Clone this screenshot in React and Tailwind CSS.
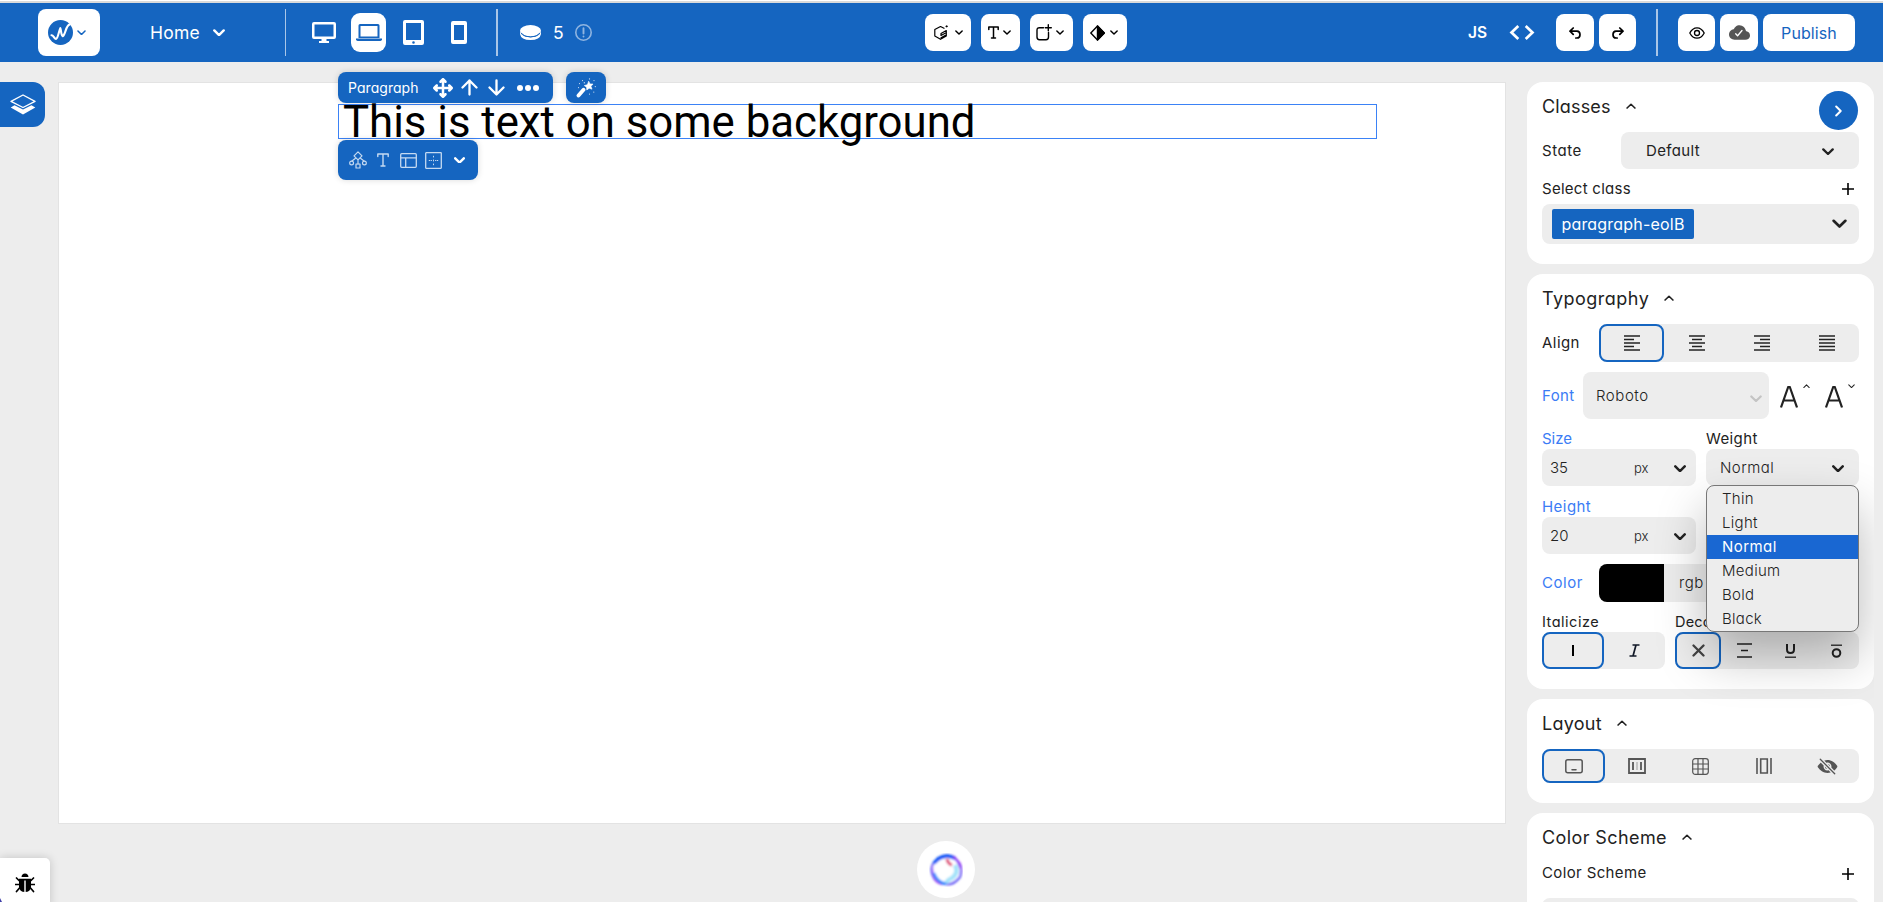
import React from "react";
import { FaArrowsUpDownLeftRight } from "react-icons/fa6";
import { IoCloudDone, IoEyeOff } from "react-icons/io5";

function Svg({ w, h, vb, className = "", sw = 1.5, children }) {
  return (
    <svg width={w} height={h} viewBox={vb || `0 0 ${w} ${h}`} className={`block shrink-0 ${className}`} fill="none" stroke="currentColor" strokeWidth={sw} strokeLinecap="round" strokeLinejoin="round">
      {children}
    </svg>
  );
}

function Chevron({ w = 12, up = false, sw = 2.2, className = "" }) {
  const h = w * 0.62;
  return (
    <Svg w={w} h={h} vb="0 0 12 7.4" sw={sw} className={className}>
      <path d={up ? "M1.3 6 L6 1.5 L10.7 6" : "M1.3 1.4 L6 6 L10.7 1.4"} />
    </Svg>
  );
}

function ToolButton({ className, children }) {
  return <button className={`flex h-[37px] items-center rounded-[8px] bg-white text-black ${className}`}>{children}</button>;
}

function Header() {
  return (
    <header className="flex h-[59px] shrink-0 items-center bg-[#1565c0] text-white">
      <button className="ml-[38px] flex h-[47px] w-[62px] items-center rounded-[8px] bg-white pl-[10px] text-[#1565c0]">
        <svg width="25" height="25" viewBox="0 0 25 25" className="block">
          <circle cx="12.5" cy="12.5" r="12.5" fill="#1565c0" />
          <path d="M3.5 15.2 C5.5 15 5.8 18.5 8 19 C10 18.6 11 10.5 12.3 8.2 C13.2 10 13 15.5 14.8 16.2 C17.5 14.5 18 5 21.5 4.6" stroke="#fff" strokeWidth="2.1" fill="none" strokeLinecap="round" strokeLinejoin="round" />
        </svg>
        <Chevron w={9} sw={2} className="ml-1" />
      </button>
      <div className="ml-[50px] w-[63px] text-[17.5px] font-normal leading-none tracking-[0.25px]">Home</div>
      <Chevron w={12} sw={2.4} />
      <div className="ml-[60px] h-[47px] w-px bg-[#a9c6e8]" />
      <div className="ml-[26px] flex items-center">
        <svg width="24" height="21" viewBox="0 0 24 21" className="block"><path fillRule="evenodd" fill="#fff" d="M2 0H22Q24 0 24 2V15Q24 17 22 17H14.5V19H17V21H7V19H9.5V17H2Q0 17 0 15V2Q0 0 2 0ZM2.500 2.500V14.500H21.500V2.500Z" /></svg>
        <div className="ml-[15px] flex h-[39px] w-[35px] items-center justify-center rounded-[9px] bg-white">
          <svg width="26" height="17" viewBox="0 0 26 17" className="block"><path fill="#1565c0" fillRule="evenodd" d="M4 0H22Q23.500 0 23.500 1.500V14H2.500V1.500Q2.500 0 4 0ZM4.500 2V12.500H21.500V2Z" /><path fill="#1565c0" d="M0 14.500H26V15.500Q25.500 17 24 17H2Q.5 17 0 15.500Z" /></svg>
        </div>
        <svg width="21" height="25" viewBox="0 0 21 25" className="ml-[17px] block"><path fillRule="evenodd" fill="#fff" d="M2 0H19Q21 0 21 2V23Q21 25 19 25H2Q0 25 0 23V2Q0 0 2 0ZM3 3V20H18V3ZM10.500 21.200A1.300 1.300 0 1 0 10.500 23.800A1.300 1.300 0 1 0 10.500 21.200Z" /></svg>
        <svg width="16" height="23" viewBox="0 0 16 23" className="ml-[27px] block"><path fillRule="evenodd" fill="#fff" d="M2 0H14Q16 0 16 2V21Q16 23 14 23H2Q0 23 0 21V2Q0 0 2 0ZM3 4V19H13V4Z" /></svg>
      </div>
      <div className="ml-[29px] h-[47px] w-[2px] bg-[#a9c6e8]" />
      <svg width="21" height="15" viewBox="0 0 21 15" className="ml-[22px] block"><ellipse cx="10.500" cy="5.700" rx="10.500" ry="5.700" fill="#fff" /><path d="M0 6V9Q1 15 10.500 15Q20 15 21 9V6Q20 12 10.500 12.300Q1 12 0 6Z" fill="#fff" /><path d="M1 8Q4 12 10.500 12Q17 12 20 8" stroke="#1565c0" strokeWidth="1" fill="none" /></svg>
      <div className="ml-3 w-[22px] text-[17.500px] font-normal leading-none">5</div>
      <Svg w={17} h={17} sw={1.6} className="text-[#8fb4e0]"><circle cx="8.500" cy="8.500" r="7.700" /><path d="M8.500 4.300V9.600M8.500 12.400V12.500" strokeWidth="1.900" /></Svg>

      <div className="ml-[333px] flex items-center gap-[10px]">
        <ToolButton className="w-[46px] gap-[6px] pl-[9px]">
          <Svg w={15} h={15} sw={1.200}><path d="M10 3.300L6.500 1.500L.8 4.500V11L6.500 14.300L12.300 11V5.500L7 8.500V10.500L12 7.800M7 12.800L12 10M12 1.300H13.300M12.700 .8V1.800" /></Svg>
          <Chevron w={8} />
        </ToolButton>
        <ToolButton className="w-[39px] gap-[4px] pl-[7px]">
          <Svg w={11} h={13} sw={1.500}><path d="M.8 3.500V1H10.200V3.500M5.500 1V12M3.500 12H7.500" /></Svg>
          <Chevron w={8} />
        </ToolButton>
        <ToolButton className="w-[43px] gap-[4px] pl-[6px]">
          <Svg w={16} h={17} sw={1.400}><path d="M7.500 3.700H3.500Q1 3.700 1 6.200V13Q1 15.700 3.500 15.700H10Q12.500 15.700 12.500 13V8.500M12.300 .8V6.800M9.300 3.800H15.300" /></Svg>
          <Chevron w={8} />
        </ToolButton>
        <ToolButton className="w-[44px] gap-[5px] pl-[7px]">
          <Svg w={15} h={16} sw={1.400}><path d="M7.500 1L14.300 8L7.500 15L.8 8Z" /><path d="M7.500 1L14.300 8L7.500 15Z" fill="currentColor" /></Svg>
          <Chevron w={8} />
        </ToolButton>
      </div>

      <div className="ml-[341px] w-[41px] text-[15.500px] font-semibold leading-none">JS</div>
      <Svg w={26} h={15} sw={2.700}><path d="M9.300 1L2.500 7.500L9.300 14M16.700 1L23.500 7.500L16.700 14" strokeLinejoin="miter" strokeLinecap="butt" /></Svg>
      <ToolButton className="ml-[21px] w-[38px] justify-center"><Svg w={12} h={12} sw={1.700}><path d="M4.200 1L1 4.200L4.200 7.400M1 4.200H8Q11 4.400 11 7.700Q11 11 8 11H6.800" /></Svg></ToolButton>
      <ToolButton className="ml-[5px] w-[37px] justify-center"><Svg w={12} h={12} sw={1.700}><path d="M7.800 1L11 4.200L7.800 7.400M11 4.200H4Q1 4.400 1 7.700Q1 11 4 11H5.200" /></Svg></ToolButton>
      <div className="ml-5 h-[47px] w-[2px] bg-[#a9c6e8]" />
      <ToolButton className="ml-5 w-[37px] justify-center"><Svg w={16} h={12} sw={1.300}><path d="M.8 6Q3.500 .8 8 .8T15.200 6Q12.500 11.200 8 11.200T.8 6Z" /><circle cx="8" cy="6" r="2.500" /></Svg></ToolButton>
      <ToolButton className="ml-[5px] w-[38px] justify-center"><IoCloudDone size={21} color="#555" /></ToolButton>
      <button className="ml-[5px] h-[37px] w-[92px] rounded-[8px] bg-white text-[16px] font-normal tracking-[0.1px] text-[#1565c0]">Publish</button>
    </header>
  );
}

function CanvasArea() {
  return (
    <main className="flex w-[1527px] shrink-0 items-start">
      <div className="mt-5 flex h-[45px] w-[45px] shrink-0 items-center justify-center rounded-r-[12px] bg-[#1565c0] text-white">
        <Svg w={26} h={21} sw={1.400}><path d="M13 1L25 7.300L13 13.500L1 7.300Z" /><path d="M4.500 11.300L13 15.600L21.500 11.300L25.300 13.500L13 20.500L.7 13.500Z" fill="currentColor" stroke="none" /></Svg>
      </div>
      <div className="ml-[13px] mt-5 h-[742px] w-[1448px] border border-[#e3e3e3] bg-white pl-[279px] pt-[21px]">
        <div className="relative h-[35px] w-[1039px] border border-[#3b82f6]">
          <p className="whitespace-nowrap pl-[4px] font-['Roboto',sans-serif] text-[43.750px] leading-[35px] text-black">This is text on some background</p>
          <div className="absolute -top-[33px] left-[-1px] flex items-center gap-[13px]">
            <div className="flex h-[31px] w-[215px] items-center rounded-[8px] bg-[#1565c0] pl-[10px] text-white shadow-[0_0_6px_rgba(0,0,0,0.15)]">
              <span className="w-[85px] text-[14px] font-normal tracking-[0.05px]">Paragraph</span>
              <FaArrowsUpDownLeftRight size={20} />
              <Svg w={17} h={17} sw={2.300} className="ml-2"><path d="M8.500 15.500V1.500M1.500 8.500L8.500 1.500L15.500 8.500" /></Svg>
              <Svg w={17} h={17} sw={2.300} className="ml-[10px]"><path d="M8.500 1.500V15.500M1.500 8.500L8.500 15.500L15.500 8.500" /></Svg>
              <Svg w={22} h={6} className="ml-[12px]"><g fill="currentColor" stroke="none"><circle cx="3" cy="3" r="3" /><circle cx="11" cy="3" r="3" /><circle cx="19" cy="3" r="3" /></g></Svg>
            </div>
            <div className="flex h-[31px] w-[40px] items-center justify-center rounded-[8px] bg-[#1565c0] text-white shadow-[0_0_6px_rgba(0,0,0,0.15)]">
              <Svg w={20} h={20} sw={.6}><path d="M2.500 17.500L7.500 11.800" strokeWidth="3.800" /><path d="M12.800 3.500L14 6L17 6L15 8.300L16 11.200L13.200 10.200L10.800 12L10.600 9.200L8.300 7.600L11.200 6.700Z" fill="currentColor" /><path d="M6.500 2.500V2.600M3.500 5.500V5.600M13.500 .8V.9M18 2.500V2.600M19.300 8.500V8.600M17.800 14V14.100M2.500 9.500V9.600M13.500 16V16.100M8.300 4.700V4.800" strokeWidth="1.200" opacity=".8" /></Svg>
            </div>
          </div>
          <div className="absolute left-[-1px] top-[35px] flex h-[40px] w-[140px] items-center rounded-[8px] bg-[#1565c0] pl-[11px] text-[#c5daf1] shadow-[0_0_6px_rgba(0,0,0,0.15)]">
            <Svg w={18} h={18} sw={1.200}><path d="M9 .8L13 4.800L9 8.800L5 4.800ZM9 8.800V13M6.200 7.500L3 10M11.800 7.500L15 10" /><circle cx="2.600" cy="12" r="1.900" /><circle cx="15.400" cy="12" r="1.900" /><rect x="7" y="13" width="4" height="4" /></Svg>
            <Svg w={12} h={14} sw={1.400} className="ml-[10px]"><path d="M.8 3.500V1H11.200V3.500M6 1V13M4 13H8" /></Svg>
            <Svg w={17} h={15} sw={1.300} className="ml-[11px]"><rect x=".7" y=".7" width="15.600" height="13.600" rx="1" /><path d="M1 4.800H16M5.700 5V14" /></Svg>
            <Svg w={17} h={17} sw={1.300} className="ml-[8px]"><rect x=".7" y=".7" width="15.600" height="15.600" rx=".5" /><path d="M8.500 4.200V5M8.500 8V9M8.500 12V12.800M4.200 8.500H5M12 8.500H12.800M6.500 8.500H6.600M10.500 8.500H10.600" strokeWidth="1" /></Svg>
            <Chevron w={11} sw={2.700} className="ml-[12px] text-white" />
          </div>
        </div>
      </div>
    </main>
  );
}

function CardTitle({ className = "tracking-[0.15px]", children }) {
  return (
    <div className={`flex h-[27px] items-center gap-[15px] text-[18px] leading-none text-[#222] ${className}`}>
      <span>{children}</span>
      <Chevron w={10} up sw={2} />
    </div>
  );
}

function Card({ className = "", children }) {
  return <section className={`relative w-[347px] shrink-0 rounded-[16px] bg-white px-[15px] ${className}`}>{children}</section>;
}

const selected = "rounded-[8px] border-2 border-[#1565c0]";

function Plus() {
  return <Svg w={12} h={12} sw={1.600} className="text-black"><path d="M6 0V12M0 6H12" strokeLinecap="butt" /></Svg>;
}

function Lines({ rows }) {
  return <Svg w={16} h={16} sw={1.500}>{rows.map(([a, b], i) => <path key={i} d={`M${a} ${1 + i * 3.500}H${b}`} strokeLinecap="butt" />)}</Svg>;
}

const full = [0, 16];
const aligns = [
  [full, [0, 10], full, [0, 10], full],
  [full, [3, 13], full, [3, 13], full],
  [full, [6, 16], full, [6, 16], full],
  [full, full, full, full, full],
];

function Measure({ label, value, labelClass }) {
  return (
    <div className="w-[154px]">
      <div className={`flex h-[20px] items-center text-[15px] text-[#3b7cf5] ${labelClass}`}>{label}</div>
      <div className="flex h-[37px] items-center rounded-[8px] bg-[#ededed] pl-2 pt-[2px] text-[15px] font-light text-[#222]">
        <span className="w-[84px]">{value}</span>
        <span className="w-[40px] text-[13px]">px</span>
        <Chevron w={12} sw={2.500} />
      </div>
    </div>
  );
}

function FontStep({ up }) {
  return (
    <div className="flex items-start">
      <Svg w={18} h={22} sw={2.200}><path d="M1 21.500L8.200 1H9.800L17 21.500M3.800 14.500H14.200" strokeLinecap="butt" /></Svg>
      <Chevron w={7} up={up} sw={1.800} className="-mt-[2px] ml-[5px]" />
    </div>
  );
}

function Typography() {
  const weights = ["Thin", "Light", "Normal", "Medium", "Bold", "Black"];
  return (
    <Card className="h-[415px] pt-[11px]">
      <CardTitle className="tracking-[0.48px]">Typography</CardTitle>
      <div className="mt-[12px] flex h-[38px] items-center">
        <span className="w-[57px] text-[15px] tracking-[0.45px]">Align</span>
        <div className="grid h-full w-[260px] grid-cols-4 rounded-[8px] bg-[#ededed]">
          {aligns.map((rows, i) => (
            <div key={i} className={`flex items-center justify-center ${i === 0 ? selected : ""}`}><Lines rows={rows} /></div>
          ))}
        </div>
      </div>
      <div className="mt-[10px] flex h-[47px] items-center">
        <span className="w-[41px] pt-[2px] text-[15px] tracking-[0.4px] text-[#3b7cf5]">Font</span>
        <div className="flex h-full w-[186px] items-center justify-between rounded-[8px] bg-[#ededed] pl-[13px] pr-[7px] pt-[2px] text-[15px] font-light tracking-[0.55px]">
          <span>Roboto</span>
          <Chevron w={12} className="mt-[4px] text-[#c4c4c4]" />
        </div>
        <div className="ml-[11px] flex gap-[15px] pt-[3px]"><FontStep up /><FontStep /></div>
      </div>
      <div className="mt-[10px] flex gap-[10px]">
        <Measure label="Size" value="35" />
        <div className="relative w-[153px]">
          <div className="flex h-[20px] items-center text-[15px] tracking-[0.4px]">Weight</div>
          <div className="flex h-[37px] items-center justify-between rounded-[8px] bg-[#ededed] pl-[14px] pr-[15px] pt-[2px] text-[15px] font-light tracking-[0.45px]"><span>Normal</span><Chevron w={12} sw={2.500} /></div>
          <ul className="absolute left-0 top-[56px] z-10 h-[147px] w-[153px] rounded-[8px] border border-[#777] bg-[#ededed] pt-[1px] text-[15px] font-light shadow-[0_24px_50px_rgba(0,0,0,0.28)]">
            {weights.map((w) => (
              <li key={w} className={`flex h-[24px] items-center pl-[15px] ${w === "Normal" ? "bg-[#1967d2] font-normal tracking-[0.45px] text-white" : "tracking-[0.3px] text-[#222]"}`}>{w}</li>
            ))}
          </ul>
        </div>
      </div>
      <div className="mt-[11px]"><Measure label="Height" value="20" labelClass="tracking-[0.45px]" /></div>
      <div className="mt-[10px] flex h-[38px] items-center">
        <span className="w-[57px] text-[15px] tracking-[0.55px] text-[#3b7cf5]">Color</span>
        <div className="flex h-full w-[260px] items-center overflow-hidden rounded-[8px] bg-[#ededed]">
          <div className="h-full w-[65px] bg-black" />
          <span className="pl-[15px] text-[15px] font-light tracking-[0.5px]">rgb</span>
        </div>
      </div>
      <div className="mt-[10px] flex gap-[10px]">
        <div className="w-[123px]">
          <div className="flex h-[20px] items-center text-[14.500px] tracking-[0.5px]">Italicize</div>
          <div className="grid h-[37px] grid-cols-2 rounded-[8px] bg-[#ededed]">
            <div className={`flex items-center justify-center ${selected}`}><Svg w={2} h={11} sw={2}><path d="M1 0V11" strokeLinecap="butt" className="text-black" /></Svg></div>
            <div className="flex items-center justify-center"><Svg w={11} h={13} sw={1.700} className="text-[#111827]"><path d="M3.500 1H10.500M.5 12H7.500M7 1L4 12" strokeLinecap="butt" /></Svg></div>
          </div>
        </div>
        <div className="w-[184px]">
          <div className="flex h-[20px] items-center text-[14.500px] tracking-[0.2px]">Decoration</div>
          <div className="grid h-[37px] grid-cols-4 rounded-[8px] bg-[#ededed]">
            <div className={`flex items-center justify-center text-[#444] ${selected}`}><Svg w={13} h={13} sw={2.300}><path d="M1.500 1.500L11.500 11.500M11.500 1.500L1.500 11.500" /></Svg></div>
            <div className="flex items-center justify-center"><Svg w={15} h={15} sw={1.600}><path d="M0 1H15M4 7.500H11M0 14H15" strokeLinecap="butt" /></Svg></div>
            <div className="flex items-center justify-center"><Svg w={11} h={14} sw={2}><path d="M2 0V5.500Q2 9 5.500 9T9 5.500V0" strokeLinecap="butt" /><path d="M0 13.200H11" strokeWidth="1.300" strokeLinecap="butt" /></Svg></div>
            <div className="flex items-center justify-center"><Svg w={11} h={14} sw={2}><circle cx="5.500" cy="9" r="3.800" /><path d="M0 1.200H11" strokeWidth="1.300" strokeLinecap="butt" /></Svg></div>
          </div>
        </div>
      </div>
    </Card>
  );
}

function SidePanel() {
  return (
    <aside className="flex h-full w-[347px] flex-col gap-[10px] overflow-hidden pt-5 text-[#222]">
      <Card className="h-[182px] pt-[11px]">
        <CardTitle>Classes</CardTitle>
        <button className="absolute right-[16px] top-[9px] flex h-[39px] w-[39px] items-center justify-center rounded-full bg-[#1565c0] text-white">
          <Svg w={7} h={12} sw={2}><path d="M1.200 1.500L5.700 6L1.200 10.500" /></Svg>
        </button>
        <div className="mt-[12px] flex h-[37px] items-center">
          <span className="w-[79px] pt-[2px] text-[15px] tracking-[0.55px]">State</span>
          <div className="flex h-full w-[238px] items-center justify-between rounded-[8px] bg-[#ededed] pl-[25px] pr-[25px] pt-[2px] text-[15px] tracking-[0.35px]"><span>Default</span><Chevron w={12} sw={2.300} /></div>
        </div>
        <div className="flex h-[35px] items-center justify-between pr-[5px] pt-[5px] text-[15px] tracking-[0.27px]"><span>Select class</span><Plus /></div>
        <div className="flex h-[40px] items-center justify-between rounded-[8px] bg-[#ededed] pl-[10px] pr-[12px]">
          <span className="flex h-[30px] w-[142px] items-center justify-center rounded-[2px] bg-[#1565c0] text-[16px] font-normal tracking-[0.2px] text-white">paragraph-eolB</span>
          <Chevron w={15} sw={2.100} />
        </div>
      </Card>
      <Typography />
      <Card className="h-[104px] pt-[11px]">
        <CardTitle className="tracking-[0.25px]">Layout</CardTitle>
        <div className="mt-[12px] grid h-[34px] grid-cols-5 rounded-[8px] bg-[#ededed] text-[#555]">
          <div className={`flex items-center justify-center ${selected}`}><Svg w={18} h={15} sw={1.500}><rect x=".8" y=".8" width="16.400" height="13" rx="2" /><path d="M7 10.700H11" /></Svg></div>
          <div className="flex items-center justify-center"><Svg w={18} h={16} sw={1.500}><path d="M1 1H17V15H1ZM5 4V12M13 4V12" strokeLinejoin="miter" strokeLinecap="butt" strokeWidth="1.800" /><path d="M9 4V12" strokeLinecap="butt" opacity=".35" /></Svg></div>
          <div className="flex items-center justify-center"><Svg w={17} h={17} sw={1.200}><rect x=".7" y=".7" width="15.600" height="15.600" rx="2.500" /><path d="M6 1V16M11 1V16M1 6H16M1 11H16" /></Svg></div>
          <div className="flex items-center justify-center"><Svg w={16} h={16} sw={1.600}><path d="M1 0V16M15 0V16M4.700 1H11.300V15H4.700Z" strokeLinejoin="miter" strokeLinecap="butt" /></Svg></div>
          <div className="flex items-center justify-center"><IoEyeOff size={21} /></div>
        </div>
      </Card>
      <Card className="h-[160px] pt-[11px]">
        <CardTitle className="tracking-[0.4px]">Color Scheme</CardTitle>
        <div className="mt-[10px] flex h-[25px] items-center justify-between pr-[5px] text-[15px] tracking-[0.37px]"><span>Color Scheme</span><Plus /></div>
        <div className="mt-3 h-[40px] rounded-[8px] bg-[#ededed]" />
      </Card>
    </aside>
  );
}

export default function App() {
  return (
    <div className="relative flex h-[902px] w-[1883px] flex-col overflow-hidden bg-[#ededed] font-['Inter',sans-serif] [font-feature-settings:'cv11']">
      <div className="h-[3px] shrink-0 border-t border-white bg-[#dadada]" />
      <Header />
      <div className="flex min-h-0 flex-1">
        <CanvasArea />
        <SidePanel />
      </div>
      <button className="absolute left-[917px] top-[841px] flex h-[57px] w-[58px] items-center justify-center rounded-full bg-white">
        <svg width="34" height="34" viewBox="0 0 34 34" className="block">
          <defs>
            <linearGradient id="orb" x1="0" y1="0" x2="1" y2="1"><stop offset="0" stopColor="#0f6bf5" /><stop offset=".55" stopColor="#a33bf5" /><stop offset="1" stopColor="#3b5cf6" /></linearGradient>
            <filter id="soft" x="-20%" y="-20%" width="140%" height="140%"><feGaussianBlur stdDeviation=".8" /></filter>
          </defs>
          <g fill="none" filter="url(#soft)">
            <path d="M9 5Q17 1 25 4L31 11Q33 18 31 24Q24 33 16 31Q7 31 4 23Q1 16 4 11Z" fill="#fff" stroke="url(#orb)" strokeWidth="2.200" />
            <path d="M5 10Q15 -1 26 5.500" stroke="#0f55f5" strokeWidth="3.500" />
            <path d="M24 4Q30 8 31.500 15" stroke="#8b35f5" strokeWidth="2.500" />
            <path d="M3.500 12Q3 19 6 25" stroke="#a866fa" strokeWidth="1.500" />
            <path d="M18 6Q19 11 23 12" stroke="#e0507c" strokeWidth="3.200" />
            <path d="M26 12Q30 20 23 25Q18 27 17 31" stroke="#8fdcf8" strokeWidth="4.500" opacity=".8" />
            <path d="M5 20Q8 29 17 31" stroke="#2b8dff" strokeWidth="2.400" />
          </g>
        </svg>
      </button>
      <div className="absolute left-0 top-[858px] h-[50px] w-[50px] rounded-tr-[5px] bg-white pl-[15px] pt-[15px] text-black shadow-[0_0_10px_rgba(0,0,0,0.18)]">
        <Svg w={20} h={20} sw={1.700}>
          <path d="M6.500 4Q6.800 .5 10 .5T13.500 4Z" fill="currentColor" stroke="none" />
          <path d="M4 5.800H16V14Q15.500 19 10 19T4 14Z" fill="currentColor" stroke="none" />
          <path d="M4 7.500L1.500 5M16 7.500L18.500 5M4 11.500H.5M16 11.500H19.500M4.500 15L1.500 18.500M15.500 15L18.500 18.500" />
          <path d="M10 7.500V19" stroke="#fff" strokeWidth="1.400" strokeLinecap="butt" />
        </Svg>
        <svg width="3" height="5" viewBox="0 0 3 5" className="absolute left-0 top-[40px] block"><path d="M0 0L2.500 5H0Z" fill="#3f3fa8" /></svg>
      </div>
    </div>
  );
}
